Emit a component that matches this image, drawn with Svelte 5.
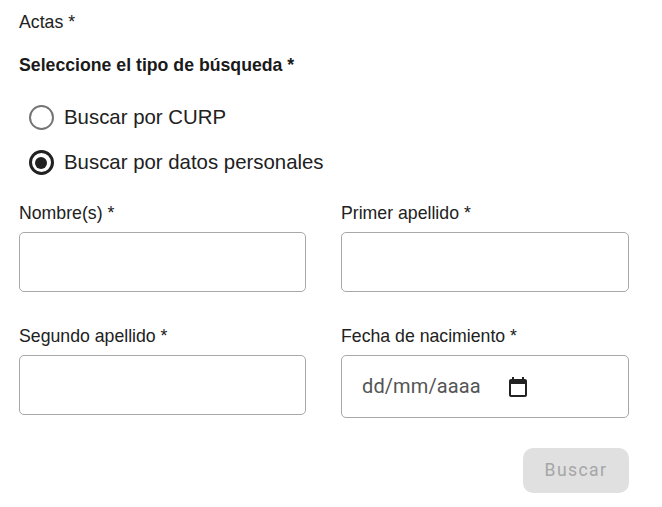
<script>
  const fields = [
    { label: 'Nombre(s) *' },
    { label: 'Primer apellido *' },
    { label: 'Segundo apellido *' }
  ];
</script>

<div class="page">
  <div class="top">Actas *</div>
  <div class="title">Seleccione el tipo de búsqueda *</div>
  <div class="radios">
    <label class="radio"><span class="dot"></span><span>Buscar por CURP</span></label>
    <label class="radio"><span class="dot on"></span><span>Buscar por datos personales</span></label>
  </div>
  <div class="grid">
    {#each fields as f}
      <div class="field">
        <div class="lab">{f.label}</div>
        <div class="box"></div>
      </div>
    {/each}
    <div class="field">
      <div class="lab">Fecha de nacimiento *</div>
      <div class="box date">
        <span class="ph">dd/mm/aaaa</span>
        <svg width="24" height="24" viewBox="0 0 24 24" fill="#222"><path d="M19 4h-1V2h-2v2H8V2H6v2H5c-1.1 0-2 .9-2 2v14c0 1.1.9 2 2 2h14c1.1 0 2-.9 2-2V6c0-1.1-.9-2-2-2zm0 16H5V9h14v11z"/></svg>
      </div>
    </div>
  </div>
  <div class="actions"><div class="btn">Buscar</div></div>
</div>

<style>
  :global(body) { margin: 0; background: #fff; }
  .page {
    width: 662px; height: 507px; box-sizing: border-box; overflow: hidden;
    padding: 13px 33px 0 19px;
    font-family: "Liberation Sans", Arial, sans-serif; color: #212121; font-size: 17.7px;
  }
  .top { line-height: 18px; }
  .title { font-weight: 700; line-height: 18px; margin-top: 25px; color: #1a1a1a; }
  .radios { margin-top: 31px; padding-left: 9.5px; display: flex; flex-direction: column; gap: 20px; }
  .radio { display: flex; align-items: center; gap: 10.5px; font-size: 20.4px; line-height: 25px; }
  .dot { width: 25px; height: 25px; box-sizing: border-box; border: 2.5px solid #757575; border-radius: 50%; display: flex; align-items: center; justify-content: center; }
  .dot.on { border: 3px solid #212121; }
  .dot.on::after { content: ""; width: 12px; height: 12px; border-radius: 50%; background: #212121; }
  .grid { margin-top: 29px; display: grid; grid-template-columns: 287px 288px; column-gap: 35px; row-gap: 35px; align-items: start; }
  .lab { line-height: 18px; margin-bottom: 10px; }
  .box { height: 60px; box-sizing: border-box; border: 1px solid #a8a8a8; border-radius: 5px; background: #fff; }
  .box.date { height: 63px; display: flex; align-items: center; padding-left: 20px; gap: 25px; }
  .ph { font-family: Roboto, sans-serif; font-size: 20px; letter-spacing: 0.1px; color: #555; margin-bottom: 1px; }
  .date svg { flex: none; }
  .actions { margin-top: 30px; display: flex; justify-content: flex-end; }
  .btn { width: 106px; height: 45px; box-sizing: border-box; padding-bottom: 2px; border-radius: 10px; background: #e0e0e0; color: #a6a6a6; display: flex; align-items: center; justify-content: center; font-family: Roboto, sans-serif; font-size: 17.6px; font-weight: 400; letter-spacing: 1.4px; }
</style>
